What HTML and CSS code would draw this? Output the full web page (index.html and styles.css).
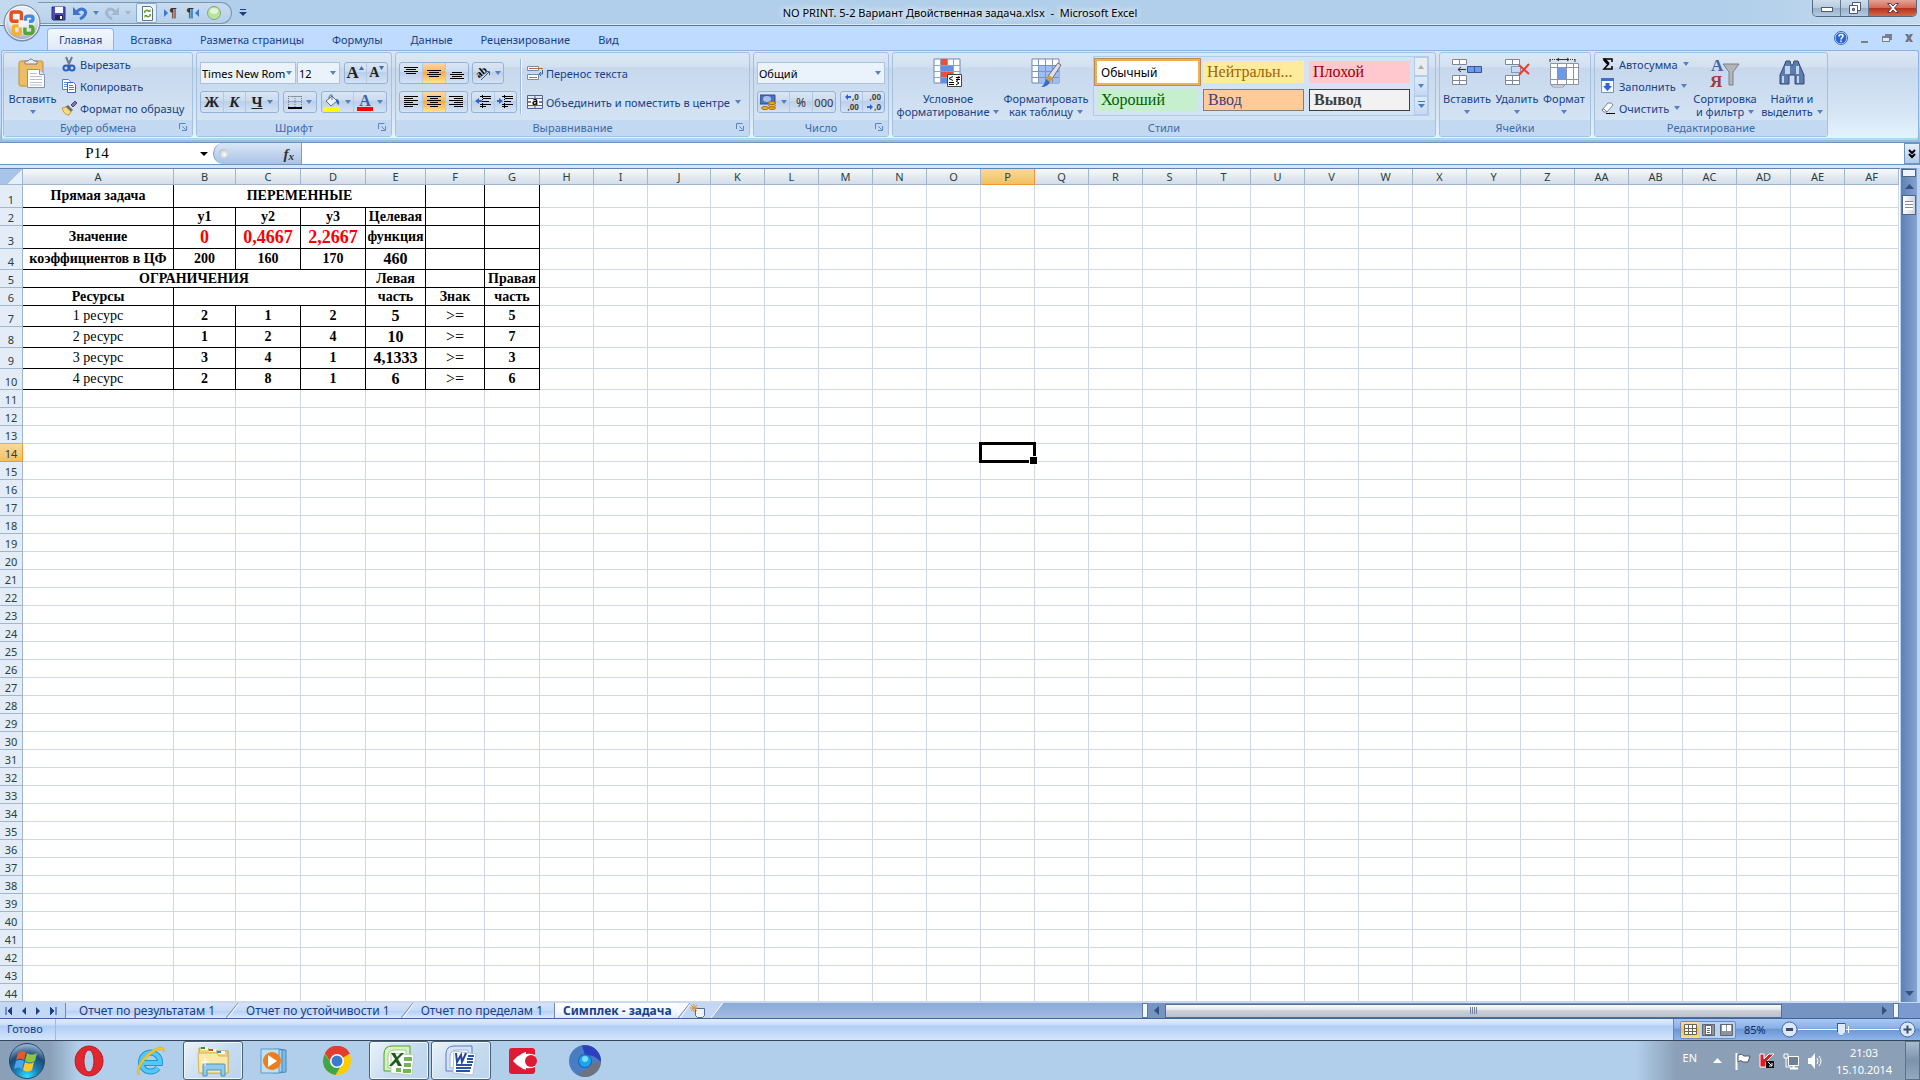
FILE: index.html
```html
<!DOCTYPE html>
<html lang="ru">
<head>
    <meta charset="UTF-8">
    <title>NO PRINT. 5-2 Вариант Двойственная задача.xlsx - Microsoft Excel</title>
    <link rel="stylesheet" href="styles.css">
</head>
<body>

<button class="orb" aria-label="Office">
  <svg width="40" height="40" viewBox="0 0 40 40">
    <defs>
      <radialGradient id="orbg" cx=".5" cy=".35" r=".65"><stop offset="0" stop-color="#fff"/><stop offset=".6" stop-color="#dfe4ec"/><stop offset="1" stop-color="#8d9bb3"/></radialGradient>
    </defs>
    <circle cx="20" cy="20" r="18" fill="url(#orbg)" stroke="#6f7f9a"/>
    <circle cx="20" cy="20" r="16.500" fill="none" stroke="#fff" opacity=".8"/>
    <g fill="none" stroke-width="3" transform="translate(-3 -3) scale(1.150)">
      <path d="M17 18.500h-4.500a2 2 0 0 1-2-2v-4a2 2 0 0 1 2-2h5a2 2 0 0 1 2 2v5" stroke="#e2501c"/>
      <path d="M23 18v-2a2 2 0 0 1 2-2h3a1.500 1.500 0 0 1 1.500 1.500v1.500a1.500 1.500 0 0 1-1.500 1.500h-2" stroke="#3b8ede"/>
      <path d="M17 22.500h-3a1.500 1.500 0 0 0-1.500 1.500v4a1.500 1.500 0 0 0 1.500 1.500h3a1.500 1.500 0 0 0 1.500-1.500v-4" stroke="#f6b02c"/>
      <path d="M22.500 24v3.500a1.500 1.500 0 0 0 1.500 1.500h4a1.500 1.500 0 0 0 1.500-1.500v-3a1.500 1.500 0 0 0-1.500-1.500h-2" stroke="#55a630"/>
    </g>
  </svg>
</button>

<header class="titlebar">
  <div class="title-left">
    <div class="qat">
      <button class="qb" aria-label="Сохранить"><svg width="16" height="16"><path d="M1 2h13v13h-12l-1-1z" fill="#4b4fb5" stroke="#2c2f83"/><path d="M4 2h8v6h-8z" fill="#f4f7fd"/><path d="M4 10h8v5h-8z" fill="#222850"/><path d="M9 11h2v3h-2z" fill="#fff"/></svg></button>
      <button class="qb" aria-label="Отменить"><svg width="16" height="16"><path d="M5 6.500c5-5 10-1 8 3-1 2-2 3-5 4.500" fill="none" stroke="#3e74ce" stroke-width="3"/><path d="M1 2v8h8z" fill="#3e74ce"/></svg></button>
      <i class="arrow"></i>
      <button class="qb" aria-label="Вернуть"><svg width="16" height="16"><path d="M11 6.500c-5-5-10-1-8 3 1 2 2 3 5 4.500" fill="none" stroke="#a3b7cf" stroke-width="3"/><path d="M15 2v8h-8z" fill="#a3b7cf"/></svg></button>
      <i class="arrow faded"></i>
      <button class="qb boxed" aria-label="Обновить"><svg width="16" height="18"><path d="M3.500 2.500h8l2 2v12h-10z" fill="#fff" stroke="#5b6f8e"/><path d="M5.500 9c0-3 3-3 4-2M11.500 10c0 3-3 3-4 2" fill="none" stroke="#5da21f" stroke-width="1.500"/><path d="M8.500 8h3v-3zM8.500 11h-3v3z" fill="#5da21f"/></svg></button>
      <button class="qb pil" aria-label="Слева направо"><svg width="5" height="8"><path d="M0 0l4 4-4 4z" fill="#3b78cf"/></svg>¶</button>
      <button class="qb pil" aria-label="Справа налево">¶<svg width="5" height="8"><path d="M5 0l-4 4 4 4z" fill="#3b78cf"/></svg></button>
      <button class="qb" aria-label="Запись"><svg width="16" height="16"><circle cx="8" cy="8" r="6.500" fill="#b7e39a" stroke="#8d9c90"/><ellipse cx="8" cy="6" rx="4" ry="3" fill="#e2f6d3"/></svg></button>
    </div>
    <button class="qcust" aria-label="Настройка панели"><svg width="8" height="8"><path d="M1 .5h6" stroke="#1d3f7a"/><path d="M0 3h8l-4 4z" fill="#1d3f7a"/></svg></button>
  </div>
  <h1 class="title">NO PRINT. 5-2 Вариант Двойственная задача.xlsx&nbsp; -&nbsp; Microsoft Excel</h1>
  <div class="winbtns">
    <button class="wb" aria-label="Свернуть"><svg width="14" height="12"><rect x="1.500" y="5.500" width="11" height="4" fill="#fff" stroke="#4c5b70"/></svg></button>
    <button class="wb" aria-label="Восстановить"><svg width="14" height="14"><path d="M4.500 1.500h8v8h-8z" fill="#fff" stroke="#4c5b70"/><path d="M1.500 4.500h8v8h-8z" fill="#fff" stroke="#4c5b70"/><path d="M4.500 7.500h2v2h-2z" fill="#9ab" stroke="#4c5b70"/></svg></button>
    <button class="wb close" aria-label="Закрыть"><svg width="14" height="12"><path d="M1.500 1.500h3l2.500 2.500 2.500-2.500h3l-4 4.500 4 4.500h-3l-2.500-2.500-2.500 2.500h-3l4-4.500z" fill="#fff" stroke="#5a3a45"/></svg></button>
  </div>
</header>

<nav class="tabs">
  <button class="tab on">Главная</button>
  <button class="tab">Вставка</button>
  <button class="tab">Разметка страницы</button>
  <button class="tab">Формулы</button>
  <button class="tab">Данные</button>
  <button class="tab">Рецензирование</button>
  <button class="tab">Вид</button>
  <div class="docbtns">
    <button aria-label="Справка"><svg width="14" height="14"><circle cx="7" cy="7" r="6" fill="#2a66d8" stroke="#eef5ff"/><circle cx="7" cy="7" r="6.500" fill="none" stroke="#3b67b0"/><path d="M5 5.500c0-3 4-2.500 4-.5 0 1.500-2 1.500-2 3.500M7 9.500v1.500" fill="none" stroke="#fff" stroke-width="1.500"/></svg></button>
    <button aria-label="Свернуть окно"><svg width="10" height="12"><path d="M1 9h7v2h-7z" fill="#7b8088"/></svg></button>
    <button aria-label="Восстановить окно"><svg width="10" height="10"><path d="M3 1h7v6h-2v2h-8v-6h3z" fill="#7b8088"/><path d="M1 5h6v3h-6z" fill="#dbe9ff"/></svg></button>
    <button aria-label="Закрыть окно"><svg width="10" height="10"><path d="M1 1h3l1 2 1-2h3l-2.500 4 2.500 4h-3l-1-2-1 2h-3l2.500-4z" fill="#70757d"/></svg></button>
  </div>
</nav>

<section class="ribbon-wrap">
<div class="ribbon">

  <div class="group g-clip">
    <div class="body">
      <button class="big paste">
        <svg width="30" height="32"><rect x="1" y="3" width="24" height="25" rx="2" fill="#eebc62" stroke="#c18f3b"/><path d="M7 6v-3h3q3-4 6 0h3v3z" fill="#e8ebf0" stroke="#7b7f88"/><path d="M9.500 11.500h12l5 5v13h-17z" fill="#fff" stroke="#8494b2"/><path d="M21.500 11.500v5h5" fill="#dce6f5" stroke="#8494b2"/><path d="M12 15.500h7M12 18.500h12M12 21.500h12M12 24.500h12M12 27h12" stroke="#b5bfd0"/></svg>
        <span>Вставить</span><i class="arrow"></i>
      </button>
      <div class="stack">
        <button class="small"><svg width="16" height="16"><path d="M5 1l4 9M11 1l-4 9" stroke="#6b7c99" stroke-width="2"/><circle cx="5" cy="12" r="2.500" fill="none" stroke="#2b5fbd" stroke-width="2"/><circle cx="11" cy="12" r="2.500" fill="none" stroke="#2b5fbd" stroke-width="2"/></svg>Вырезать</button>
        <button class="small"><svg width="16" height="16"><path d="M1.500 1.500h6l2 2v8h-8z" fill="#fff" stroke="#5b7fc0"/><path d="M3 4.500h4M3 6.500h5M3 8.500h5" stroke="#6a93d8"/><path d="M6.500 4.500h6l2 2v8h-8z" fill="#fff" stroke="#3f66b5"/><path d="M8 7.500h4M8 9.500h5M8 11.500h5" stroke="#4c7ed0"/></svg>Копировать</button>
        <button class="small"><svg width="16" height="16"><path d="M10 5l4-4 2 2-4 4z" fill="#8a6fb0" stroke="#4f4a6a"/><path d="M7 5l5 5-2 2-6-5z" fill="#6c7078"/><path d="M1 8l4-1 5 5-2 3q-5 0-7-7z" fill="#f4dc86" stroke="#c49a3a"/></svg>Формат по образцу</button>
      </div>
    </div>
    <div class="cap">Буфер обмена<svg class="dlg" width="8" height="8"><path d="M.5 6v-5.500h6M3.500 3.500l3 3M7.500 3v4.500h-4.500" fill="none" stroke="#5c85bb"/></svg></div>
  </div>

  <div class="group g-font">
    <div class="body rows">
      <div class="row">
        <div class="combo-pair">
          <label class="combo w96"><select aria-label="Шрифт"><option>Times New Rom</option></select><i class="arrow"></i></label>
          <label class="combo w42"><select aria-label="Размер"><option>12</option></select><i class="arrow"></i></label>
        </div>
        <div class="bg w44">
          <button class="serif f17" aria-label="Увеличить размер">A<svg width="5" height="4"><path d="M0 4h5l-2.500-4z" fill="#3a6bb5"/></svg></button>
          <button class="serif f14" aria-label="Уменьшить размер">A<svg width="5" height="4"><path d="M0 0h5l-2.500 4z" fill="#3a6bb5"/></svg></button>
        </div>
      </div>
      <div class="row">
        <div class="bg w79">
          <button class="serif">Ж</button><button class="serif it">К</button><button class="serif wide"><u>Ч</u><i class="arrow"></i></button>
        </div>
        <div class="bg w34">
          <button class="wide" aria-label="Границы"><svg width="14" height="14"><path d="M.5 1v12M3.500 1.500h10M.5 1.500h13M.5 6.500h13M13.500 1v12M7 1v12" stroke="#6e7c92" stroke-dasharray="1 1" fill="none"/><path d="M0 13h14" stroke="#000" stroke-width="2"/></svg><i class="arrow"></i></button>
        </div>
        <div class="bg w66">
          <button class="wide" aria-label="Заливка"><svg width="17" height="17"><path d="M2 7l6-5 5 5-6 5z" fill="#eef3fa" stroke="#5a6d8d"/><path d="M5 5q0-5 3-4v5" fill="none" stroke="#5a6d8d"/><path d="M12 5q4 0 3 6-3-1-3-6" fill="#3463b2"/><path d="M0 13h16v4h-16z" fill="#ff0"/></svg><i class="arrow"></i></button>
          <button class="wide fc" aria-label="Цвет текста"><span>A</span><i class="arrow"></i></button>
        </div>
      </div>
    </div>
    <div class="cap">Шрифт<svg class="dlg" width="8" height="8"><path d="M.5 6v-5.500h6M3.500 3.500l3 3M7.500 3v4.500h-4.500" fill="none" stroke="#5c85bb"/></svg></div>
  </div>

  <div class="group g-align">
    <div class="body">
      <div class="rows leftcol">
        <div class="row tight">
          <div class="bg w70">
            <button aria-label="По верхнему краю"><svg width="14" height="14"><path d="M0 1.500h14M2 3.500h10M0 5.500h14M2 7.500h10" stroke="#000"/></svg></button>
            <button class="sel" aria-label="По середине"><svg width="14" height="14"><path d="M0 4.500h14M2 6.500h10M0 8.500h14M2 10.500h10" stroke="#000"/></svg></button>
            <button aria-label="По нижнему краю"><svg width="14" height="14"><path d="M2 6.500h10M0 8.500h14M2 10.500h10M0 12.500h14" stroke="#000"/></svg></button>
          </div>
          <div class="bg w32">
            <button class="wide" aria-label="Ориентация"><svg width="16" height="16" class="ori"><text x="1" y="11" font-size="11" font-weight="bold" transform="rotate(-40 6 8)">ab</text><path d="M6 15l8-8M11 6.500h3.500v3.500" fill="none" stroke="#555"/></svg><i class="arrow"></i></button>
          </div>
        </div>
        <div class="row tight">
          <div class="bg w70">
            <button aria-label="По левому краю"><svg width="14" height="14"><path d="M0 1.500h14M0 3.500h9M0 5.500h14M0 7.500h9M0 9.500h14M0 11.500h9" stroke="#000"/></svg></button>
            <button class="sel" aria-label="По центру"><svg width="14" height="14"><path d="M0 1.500h14M3 3.500h8M0 5.500h14M3 7.500h8M0 9.500h14M3 11.500h8" stroke="#000"/></svg></button>
            <button aria-label="По правому краю"><svg width="14" height="14"><path d="M0 1.500h14M5 3.500h9M0 5.500h14M5 7.500h9M0 9.500h14M5 11.500h9" stroke="#000"/></svg></button>
          </div>
          <div class="bg w46">
            <button aria-label="Уменьшить отступ"><svg width="16" height="14"><path d="M5 1.500h11M8 3.500h8M8 6.500h6M5 9.500h11M5 11.500h6" stroke="#000" /><path d="M7.500 0v14" stroke="#000" stroke-dasharray="1 1"/><path d="M0 6l4-3v2h3v2h-3v2z" fill="#2e65c9"/></svg></button>
            <button aria-label="Увеличить отступ"><svg width="16" height="14"><path d="M5 1.500h11M8 3.500h8M8 6.500h6M5 9.500h11M5 11.500h6" stroke="#000" /><path d="M7.500 0v14" stroke="#000" stroke-dasharray="1 1"/><path d="M6 6l-4-3v2h-2v2h2v2z" fill="#2e65c9"/></svg></button>
          </div>
        </div>
      </div>
      <div class="vline"></div>
      <div class="rows wrapcol">
        <button class="small tall"><svg width="16" height="16"><path d="M.5 1.500h11v4h-11zM.5 9.500h11v5h-11z" fill="#fff" stroke="#7b8ba5"/><path d="M2 3.500h14M2 12.500h8" stroke="#b5722c"/><path d="M15.500 5v4h-3M14 7l-2 2 2 2" fill="none" stroke="#3f5f96"/></svg>Перенос текста</button>
        <button class="small tall"><svg width="16" height="16"><path d="M.5 1.500h15v13h-15z" fill="#dfe9f8" stroke="#51658c"/><path d="M8 1v3M8 12v3M1 4.500h14M1 11.500h14" stroke="#51658c"/><path d="M1 5h14v6h-14z" fill="#fff"/><path d="M1 8h3M12 8h3" stroke="#000"/><text x="5" y="11" font-size="10" font-weight="bold">a</text></svg>Объединить и поместить в центре<i class="arrow"></i></button>
      </div>
    </div>
    <div class="cap">Выравнивание<svg class="dlg" width="8" height="8"><path d="M.5 6v-5.500h6M3.500 3.500l3 3M7.500 3v4.500h-4.500" fill="none" stroke="#5c85bb"/></svg></div>
  </div>

  <div class="group g-num">
    <div class="body rows">
      <div class="row"><label class="combo full"><select aria-label="Числовой формат"><option>Общий</option></select><i class="arrow"></i></label></div>
      <div class="row">
        <div class="bg w80">
          <button class="wide" aria-label="Финансовый"><svg width="17" height="17"><path d="M0 1h15v9h-15z" fill="#4a72bd" stroke="#2f4f8f"/><ellipse cx="7" cy="5" rx="4" ry="3" fill="#a9c1ea"/><g fill="#f0b22d" stroke="#a86e10"><ellipse cx="12" cy="14" rx="3.500" ry="1.500"/><ellipse cx="12" cy="11.500" rx="3.500" ry="1.500"/><ellipse cx="12" cy="9" rx="3.500" ry="1.500"/><ellipse cx="5" cy="14" rx="3.500" ry="1.500"/></g></svg><i class="arrow"></i></button>
          <button class="glyph">%</button><button class="glyph n000">000</button>
        </div>
        <div class="bg w46">
          <button class="dec" aria-label="Увеличить разрядность"><span><svg width="6" height="6"><path d="M0 3l3-3v2h3v2h-3v2z" fill="#2e65c9"/></svg>,0</span><span>,00</span></button>
          <button class="dec" aria-label="Уменьшить разрядность"><span>,00</span><span><svg width="6" height="6"><path d="M6 3l-3-3v2h-3v2h3v2z" fill="#2e65c9"/></svg>,0</span></button>
        </div>
      </div>
    </div>
    <div class="cap">Число<svg class="dlg" width="8" height="8"><path d="M.5 6v-5.500h6M3.500 3.500l3 3M7.500 3v4.500h-4.500" fill="none" stroke="#5c85bb"/></svg></div>
  </div>

  <div class="group g-styles">
    <div class="body">
      <button class="big w104">
        <svg width="30" height="30"><path d="M1 1h26v24h-26z" fill="#fff" stroke="#6f87ad"/><path d="M8 1h6v6h-6z" fill="#f04e37"/><path d="M8 7h12v6h-12z" fill="#5f8fe8"/><path d="M8 13h12v6h-12z" fill="#f04e37"/><path d="M8 19h6v6h-6z" fill="#5f8fe8"/><path d="M7.500 1v24M14.500 1v6M14.500 19v6M20.500 1v24M1 7.500h26M1 13.500h26M1 19.500h26" stroke="#8ea3c4" fill="none"/><path d="M14.500 16.500h14v12h-14z" fill="#fff" stroke="#444"/><path d="M20 18.500l-4 2 4 2M16 24.500h5M16 26.500h5M23 19.500h4M23 21.500h4M26 18l-2 5M23 23l3 2-3 2" fill="none" stroke="#000"/></svg>
        <span>Условное</span><span>форматирование<i class="arrow"></i></span>
      </button>
      <button class="big w92">
        <svg width="30" height="30"><path d="M1 1h27v24h-27z" fill="#fff" stroke="#6f87ad"/><path d="M8 7h20v18h-20z" fill="#9dbdf5"/><path d="M7.500 1v24M14.500 1v24M21.500 1v24M1 7.500h27M1 13.500h27M1 19.500h27" stroke="#7d95bd" fill="none"/><path d="M27 5l3 2-9 14-4-3z" fill="#dcdfe4" stroke="#6b6f78"/><path d="M18 17l4 3-3 4-4-3z" fill="#d99a3a"/><path d="M15 21l4 3q-2 5-9 5 4-3 5-8z" fill="#3c6bc0"/></svg>
        <span>Форматировать</span><span>как таблицу<i class="arrow"></i></span>
      </button>
      <div class="gallery">
        <div class="cells">
          <button class="st normal">Обычный</button><button class="st neutral">Нейтральн...</button><button class="st bad">Плохой</button>
          <button class="st good">Хороший</button><button class="st input">Ввод</button><button class="st output">Вывод</button>
        </div>
        <div class="gscroll">
          <button class="off" aria-label="Вверх"><svg width="7" height="4"><path d="M0 4h6l-3-4z" fill="#a9aeb5"/></svg></button>
          <button aria-label="Вниз"><i class="arrow"></i></button>
          <button aria-label="Дополнительно"><svg width="7" height="8"><path d="M0 .5h7" stroke="#4a7ab8"/><path d="M0 3h7l-3.500 4z" fill="#4a7ab8"/></svg></button>
        </div>
      </div>
    </div>
    <div class="cap">Стили</div>
  </div>

  <div class="group g-cells">
    <div class="body">
      <button class="big w50"><svg width="32" height="30"><path d="M1.500 1.500h14v5h-14zM1.500 17.500h14v9h-14z" fill="#fff" stroke="#7f8799"/><path d="M8.500 2v5M8.500 17v10M1 22.500h15" stroke="#7f8799"/><path d="M16.500 8.500h14v6h-14z" fill="#6d9bea" stroke="#34559a"/><path d="M23.500 9v6" stroke="#34559a"/><path d="M15 11.500h-8M10 9l-3 2.500 3 2.500" fill="none" stroke="#333"/></svg><span>Вставить</span><i class="arrow"></i></button>
      <button class="big w50"><svg width="28" height="30"><path d="M2.500 1.500h14v5h-14zM2.500 17.500h14v9h-14z" fill="#fff" stroke="#7f8799"/><path d="M9.500 2v5M9.500 17v10M2 22.500h15" stroke="#7f8799"/><path d="M8.500 8.500h9v6h-9z" fill="none" stroke="#34559a" stroke-dasharray="1 1"/><path d="M16 7l10 9M26 6l-10 11" stroke="#ee3b24" stroke-width="2"/></svg><span>Удалить</span><i class="arrow"></i></button>
      <button class="big w44"><svg width="30" height="30"><path d="M1 1v3M26 1v3" stroke="#333"/><path d="M1 1.500h25" stroke="#333" stroke-dasharray="1 1"/><path d="M8 1.500h12M10 0l-2 1.500 2 1.500M18 0l2 1.500-2 1.500" fill="none" stroke="#333"/><path d="M1.500 5.500h28v21h-28z" fill="#fff" stroke="#8c94a5"/><path d="M9 10h9v12h-9z" fill="#6d9bea"/><path d="M1 9.500h29M1 21.500h29M8.500 5v22M17.500 5v22M24.500 5v22" stroke="#8c94a5" fill="none"/><path d="M2 27h14l-2 2h-10z" fill="#fff" stroke="#8c94a5"/></svg><span>Формат</span><i class="arrow"></i></button>
    </div>
    <div class="cap">Ячейки</div>
  </div>

  <div class="group g-edit">
    <div class="body">
      <div class="stack editstack">
        <button class="small"><svg width="14" height="14"><path d="M11 5v-3h-8l4.500 5-4.500 5h8v-3" fill="none" stroke="#000" stroke-width="1.500"/><path d="M3 2l4.500 5" stroke="#000" stroke-width="3"/></svg>Автосумма<i class="arrow"></i></button>
        <button class="small"><svg width="14" height="16"><path d="M.5.5h12v14h-12z" fill="#f2f7ff" stroke="#7893bf"/><path d="M0 0h13v3h-13z" fill="#3f70c8"/><path d="M4.500 5h4v3h2.500l-4.500 5-4.500-5h2.500z" fill="#2f66d2"/></svg>Заполнить<i class="arrow"></i></button>
        <button class="small"><svg width="14" height="14"><path d="M1 9l6-7q4-1 5 2l-6 7q-4 1-5-2z" fill="#fff" stroke="#75839b"/><path d="M1 9q1-3 5 2" fill="none" stroke="#75839b"/><path d="M5 12.500h9" stroke="#000"/></svg>Очистить<i class="arrow"></i></button>
      </div>
      <button class="big w72"><svg width="30" height="30" class="az"><path d="M13 6h16l-6 8v13h-4v-13z" fill="#b3b5b8" stroke="#7d8086"/><text x="1" y="13" font-size="17" font-weight="bold" fill="#4664ad">А</text><text x="0" y="29" font-size="17" font-weight="bold" fill="#a33a3a">Я</text></svg><span>Сортировка</span><span>и фильтр<i class="arrow"></i></span></button>
      <button class="big w62"><svg width="30" height="30"><path d="M9 3h4l1 4h2l1-4h4l2 5 4 9v9h-9v-9h-6v9h-9v-9l4-9z" fill="#5b7cae" stroke="#34496f"/><path d="M8 8h5v8h-5zM19 8h3v8h-3zM5 18h2v7h-2zM20 18h2v7h-2z" fill="#c3d3ea"/></svg><span>Найти и</span><span>выделить<i class="arrow"></i></span></button>
    </div>
    <div class="cap">Редактирование</div>
  </div>

</div>
</section>

<div class="fbar">
  <div class="namebox"><input type="text" value="P14" aria-label="Имя"><i class="arrow black"></i></div>
  <div class="fx"><span class="dot"></span><button aria-label="Вставить функцию">f<sub>x</sub></button></div>
  <input class="formula" type="text" aria-label="Строка формул">
  <button class="expand" aria-label="Развернуть"><svg width="8" height="10"><path d="M1 1l3 3 3-3M1 5l3 3 3-3" fill="none" stroke="#000" stroke-width="2"/></svg></button>
</div>

<main class="sheet">
  <div class="gridwrap">
    <table class="grid">
      <colgroup>
        <col class="c-head"><col class="c-a"><col class="c-b"><col class="c-c"><col class="c-d"><col class="c-e"><col class="c-f"><col class="c-g">
        <col><col><col class="c-j"><col span="22">
      </colgroup>
      <thead><tr id="letters"><th class="corner"></th></tr></thead>
      <tbody id="rows">
        <tr class="h23"><th>1</th><td class="k b">Прямая задача</td><td class="k b" colspan="4">ПЕРЕМЕННЫЕ</td><td class="k"></td><td class="k"></td></tr>
        <tr class="h18"><th>2</th><td class="k"></td><td class="k b">y1</td><td class="k b">y2</td><td class="k b">y3</td><td class="k b">Целевая</td><td class="k"></td><td class="k"></td></tr>
        <tr class="h23"><th>3</th><td class="k b">Значение</td><td class="k red">0</td><td class="k red">0,4667</td><td class="k red">2,2667</td><td class="k b">функция</td><td class="k"></td><td class="k"></td></tr>
        <tr class="h21"><th>4</th><td class="k b">коэффициентов в ЦФ</td><td class="k b">200</td><td class="k b">160</td><td class="k b">170</td><td class="k b big16">460</td><td class="k"></td><td class="k"></td></tr>
        <tr class="h18"><th>5</th><td class="k b" colspan="4">ОГРАНИЧЕНИЯ</td><td class="k b">Левая</td><td class="k"></td><td class="k b">Правая</td></tr>
        <tr class="h18"><th>6</th><td class="k b">Ресурсы</td><td class="k" colspan="3"></td><td class="k b">часть</td><td class="k b">Знак</td><td class="k b">часть</td></tr>
        <tr class="h21"><th>7</th><td class="k">1 ресурс</td><td class="k b">2</td><td class="k b">1</td><td class="k b">2</td><td class="k b big16">5</td><td class="k big16">&gt;=</td><td class="k b">5</td></tr>
        <tr class="h21"><th>8</th><td class="k">2 ресурс</td><td class="k b">1</td><td class="k b">2</td><td class="k b">4</td><td class="k b big16">10</td><td class="k big16">&gt;=</td><td class="k b">7</td></tr>
        <tr class="h21"><th>9</th><td class="k">3 ресурс</td><td class="k b">3</td><td class="k b">4</td><td class="k b">1</td><td class="k b big16">4,1333</td><td class="k big16">&gt;=</td><td class="k b">3</td></tr>
        <tr class="h21"><th>10</th><td class="k">4 ресурс</td><td class="k b">2</td><td class="k b">8</td><td class="k b">1</td><td class="k b big16">6</td><td class="k big16">&gt;=</td><td class="k b">6</td></tr>
      </tbody>
    </table>
  </div>
  <div class="vscroll">
    <span class="split"></span>
    <button aria-label="Вверх"><svg width="9" height="5"><path d="M0 5h9l-4.500-5z" fill="#34507f"/></svg></button>
    <span class="vthumb"></span>
    <span class="fill"></span>
    <button aria-label="Вниз"><svg width="9" height="5"><path d="M0 0h9l-4.500 5z" fill="#34507f"/></svg></button>
  </div>
</main>

<div class="sheetbar">
  <div class="sheettabs">
    <div class="navs">
      <button aria-label="Первый лист"><svg width="7" height="8"><path d="M1 0v8M7 0v8l-4-4z" stroke="#1c3f86" fill="#1c3f86" stroke-width="1"/></svg></button>
      <button aria-label="Предыдущий лист"><svg width="5" height="8"><path d="M5 0v8l-4-4z" fill="#1c3f86"/></svg></button>
      <button aria-label="Следующий лист"><svg width="5" height="8"><path d="M0 0v8l4-4z" fill="#1c3f86"/></svg></button>
      <button aria-label="Последний лист"><svg width="7" height="8"><path d="M6 0v8M0 0v8l4-4z" stroke="#1c3f86" fill="#1c3f86" stroke-width="1"/></svg></button>
    </div>
    <button class="stab first">Отчет по результатам 1</button>
    <svg class="slash" width="12" height="15"><path d="M0 15l12-15" stroke="#7389b0"/><path d="M2 15l11-15" stroke="#fff"/></svg>
    <button class="stab">Отчет по устойчивости 1</button>
    <svg class="slash" width="12" height="15"><path d="M0 15l12-15" stroke="#7389b0"/><path d="M2 15l11-15" stroke="#fff"/></svg>
    <button class="stab">Отчет по пределам 1</button>
    <button class="stab on">Симплек - задача</button>
    <svg width="12" height="15"><path d="M0 0h12l-12 15z" fill="#f6f9ff"/><path d="M12 0v15h-12z" fill="#c3d6f4"/><path d="M0 15l12-15" stroke="#7389b0"/><path d="M2 15l11-15" stroke="#fff"/></svg>
    <button class="newtab" aria-label="Вставить лист"><svg width="16" height="14"><path d="M5.500 4.500h9v7l-2 2h-5l-2-2z" fill="#eef3fc" stroke="#56698f"/><path d="M4 0v8M0 4h8M1 1l6 6M7 1l-6 6" stroke="#e0922b"/></svg></button>
    <svg width="12" height="15"><path d="M0 0h12l-12 15z" fill="#c3d6f4"/><path d="M0 15l12-15" stroke="#fff"/></svg>
  </div>
  <div class="hscroll">
    <span class="hsplit"></span>
    <button aria-label="Влево"><svg width="5" height="9"><path d="M5 0v9l-5-4.500z" fill="#34507f"/></svg></button>
    <span class="hthumb"></span>
    <span class="hfill"></span>
    <button aria-label="Вправо"><svg width="5" height="9"><path d="M0 0v9l5-4.500z" fill="#34507f"/></svg></button>
    <span class="hsplit"></span>
    <span class="hcorner"></span>
  </div>
</div>

<footer class="status">
  <span class="ready">Готово</span>
  <span class="grow"></span>
  <div class="zoom">
    <div class="views">
      <button class="sel" aria-label="Обычный"><svg width="13" height="12"><path d="M.5.5h12v10h-12zM4.500 0v11M8.500 0v11M0 4.500h13M0 7.500h13" fill="#fff" stroke="#6b6455"/></svg></button>
      <button aria-label="Разметка страницы"><svg width="13" height="12"><path d="M.5.5h12v11h-12z" fill="#8e949c" stroke="#5d6773"/><path d="M3.500 1.500h6v9h-6z" fill="#fff" stroke="#5d6773"/><path d="M5 4.500h3M5 6.500h3M5 8.500h3" stroke="#5d6773"/></svg></button>
      <button aria-label="Страничный"><svg width="13" height="12"><path d="M.5.5h12v11h-12z" fill="#8e949c" stroke="#5d6773"/><path d="M2 1h4v6h-4zM7 1h4v6h-4z" fill="#fff"/></svg></button>
    </div>
    <button class="pct">85%</button>
    <button class="zb" aria-label="Уменьшить"><svg width="17" height="17"><circle cx="8.500" cy="8.500" r="7.500" fill="#dbe8fa" stroke="#4b6796"/><path d="M5 8.500h7" stroke="#3c4c68" stroke-width="3"/></svg></button>
    <input class="slider" type="range" min="0" max="100" value="42" aria-label="Масштаб">
    <button class="zb" aria-label="Увеличить"><svg width="17" height="17"><circle cx="8.500" cy="8.500" r="7.500" fill="#dbe8fa" stroke="#4b6796"/><path d="M4.500 8.500h8M8.500 4.500v8" stroke="#3c4c68" stroke-width="2"/></svg></button>
  </div>
</footer>

<div class="taskbar">
  <button class="start" aria-label="Пуск"><svg width="38" height="38"><defs><radialGradient id="st" cx=".5" cy=".95" r=".9"><stop offset="0" stop-color="#2fe2ff"/><stop offset=".35" stop-color="#1a86c0"/><stop offset=".7" stop-color="#1c4a78"/><stop offset="1" stop-color="#8fb0cf"/></radialGradient></defs><circle cx="19" cy="19" r="17.500" fill="url(#st)" stroke="#244a6e"/><path d="M10 11q4-3 8-1l-2 8q-4-3-8 0z" fill="#e8582a"/><path d="M19 11q5 3 10 0l-2 8q-5 3-10 0z" fill="#8cc63e"/><path d="M8 19q4-2 8 0l-2 8q-4-3-8 0z" fill="#4fa3e8"/><path d="M17 20q5 3 9 0l-2 8q-5 3-9 0z" fill="#fbc92e"/></svg></button>
  <button class="task" aria-label="Opera"><svg width="30" height="32"><path d="M15 1a14 15 0 1 0 .1 0zM15 5a5 11 0 1 1-.1 0z" fill="#e0272f" fill-rule="evenodd" stroke="#c01a22"/></svg></button>
  <button class="task" aria-label="Internet Explorer"><svg width="32" height="32"><path d="M7 18h18a9.500 9.500 0 1 0-2 5" fill="none" stroke="#1f94d6" stroke-width="6"/><path d="M7 18h18a9.500 9.500 0 1 0-2 5" fill="none" stroke="#58c7f5" stroke-width="4"/><path d="M4 30c-6-3 4-22 18-27 6-2 8 0 7 4-1-3-4-3-8-1-9 4-19 17-17 24z" fill="#f7c71d" stroke="#dda514" stroke-width=".5"/></svg></button>
  <button class="task open" aria-label="Проводник"><svg width="34" height="34"><path d="M3 4h9l1 3h19v22h-28z" fill="#f2d67e" stroke="#c79f3a"/><path d="M5 3h7v3h-7z" fill="#fff"/><path d="M5 3h4v2h-4z" fill="#1da31d"/><path d="M13 5h7v3h-7z" fill="#fff"/><path d="M13 5h4v2h-4z" fill="#d94a2a"/><path d="M21 7h8v3h-8z" fill="#fff"/><path d="M21 7h4v2h-4z" fill="#2a86d8"/><path d="M2 9h19l2 3h9v17h-29z" fill="#fae9a8" stroke="#d8b452"/><path d="M7 32v-11q0-1 1-1h20q1 0 1 1v11h-4v-6h-14v6z" fill="#8fcbea" stroke="#4c93bd"/><path d="M9 14v8M5 18h8" stroke="#fff"/></svg></button>
  <button class="task" aria-label="Медиаплеер"><svg width="30" height="30"><path d="M18 3l8 1v22l-8 1z" fill="#7cbbe4" stroke="#4a87b8"/><path d="M14 3l8 1v22l-8 1z" fill="#a7d2ee" stroke="#4a87b8"/><path d="M1 3h18v24h-18z" fill="#bfdff3" stroke="#5d9ac8"/><circle cx="12" cy="15" r="9" fill="#f07d1a"/><path d="M8 9l9 6-9 6z" fill="#fff"/></svg></button>
  <button class="task" aria-label="Chrome"><svg width="30" height="30"><circle cx="15" cy="15" r="14" fill="#fc0"/><path d="M15 15l-12.100-7a14 14 0 0 1 24.200 0z" fill="#e33b2e"/><path d="M15 8h13a14 14 0 0 0-25-1l6 10z" fill="#e33b2e"/><path d="M2.900 8a14 14 0 0 0 10.600 21l6.500-11-10 1z" fill="#3fa648"/><circle cx="15" cy="15" r="7" fill="#fff"/><circle cx="15" cy="15" r="5.500" fill="#3a7bd0"/></svg></button>
  <button class="task open" aria-label="Excel"><svg width="32" height="32"><path d="M1 9q0-8 8-8h18v25h-26z" fill="#d7efc6" stroke="#4ba32c"/><path d="M5 12q0-7 7-7h11v18h-18z" fill="#fff" stroke="#9bd07c"/><path d="M8 8l23 2-2 20-21-2z" fill="#fff" stroke="#bcd0b4"/><path d="M21 12h8v4h-8zM21 18h7v4h-7zM20 24h8v4h-8zM13 23h5v4h-5z" fill="#74b457"/><path d="M8 8h4l2 4 4-4h3l-6 6 4 7h-4l-2-4-4 4h-3l6-7z" fill="#1e5b1b"/></svg></button>
  <button class="task open" aria-label="Word"><svg width="32" height="32"><path d="M1 9q0-8 8-8h18v25h-26z" fill="#d5e2f8" stroke="#5a7cc5"/><path d="M5 12q0-7 7-7h11v18h-18z" fill="#fff" stroke="#9ab2e2"/><path d="M9 6l22 3-3 21-20-2z" fill="#fff" stroke="#b5bfd8"/><path d="M23 11h6M22 14h6M22 17h6M11 20h16M11 23h15M11 26h14" stroke="#2c51a6" stroke-width="2"/><path d="M11 8l1 9 4-7 1 7 4-9" fill="none" stroke="#24479c" stroke-width="2"/></svg></button>
  <button class="task" aria-label="Просмотр"><svg width="30" height="28"><rect x="1" y="1" width="26" height="26" rx="3" fill="#df1a35"/><path d="M27 3q-14 1-22 11 8 10 22 10z" fill="#fff"/><circle cx="23" cy="14" r="6" fill="#df1a35"/><path d="M18 3h9v5q-5-2-9-1zM18 25h9v-5q-5 2-9 1z" fill="#df1a35"/></svg></button>
  <button class="task" aria-label="Браузер"><svg width="34" height="34"><circle cx="17" cy="17" r="16" fill="#4a7cc2"/><path d="M14 1.500a16 16 0 0 1 19 16.500q-7-8-16-7z" fill="#2c3fbe"/><path d="M33 17a16 16 0 0 1-25 13q10-1 14-10z" fill="#6d7480"/><circle cx="17" cy="17" r="7" fill="#1b5fc0"/><circle cx="17" cy="17" r="6" fill="#18a7ee"/><circle cx="17" cy="15" r="3" fill="#7fdcff"/></svg></button>
  <div class="tray">
    <span class="lang">EN</span>
    <svg class="more" width="9" height="5"><path d="M0 5h9l-4.500-5z" fill="#fff"/></svg>
    <svg width="16" height="18"><path d="M1.500 1v17" stroke="#fff" stroke-width="2"/><path d="M3 3q4-2 6 1h6l-2 6h-5q-2-3-5 0z" fill="#fff" stroke="#556"/></svg>
    <svg width="16" height="16"><path d="M1 1h4v5l5-5h5l-8 8v5h-6z" fill="#e01b22" stroke="#fff"/><path d="M7 8h8v7h-8z" fill="#111"/><path d="M9 9l4 4v-3M13 13h-3" fill="none" stroke="#fff"/></svg>
    <svg width="16" height="18"><path d="M5.500 4.500h10v9h-10z" fill="#6d8196" stroke="#fff"/><path d="M7 16.500h8M10.500 14v2" stroke="#fff" stroke-width="2"/><path d="M1 2h4v4h-4zM3 6v9h5" fill="none" stroke="#fff"/></svg>
    <svg width="16" height="18"><path d="M1 6h3l4-5v16l-4-5h-3z" fill="#fff"/><path d="M10 6q2 3 0 6M12 4q4 5 0 10" fill="none" stroke="#fff"/></svg>
    <div class="clock"><span>21:03</span><span>15.10.2014</span></div>
    <button class="peek" aria-label="Свернуть все окна"></button>
  </div>
</div>

<script src="grid.js"></script>
</body>
</html>
```
FILE: styles.css
```css
* {
  box-sizing: border-box;
}
body {
  margin: 0;
  height: 100vh;
  display: flex;
  flex-direction: column;
  overflow: hidden;
  position: relative;
  background: #bfdbff;
  font-family: "Noto Sans", "Open Sans", sans-serif;
  font-size: 11px;
  color: #15428b;
}
button, input, select {
  font: inherit;
  color: inherit;
  margin: 0;
  padding: 0;
  border: 0;
  background: none;
  outline: none;
}
svg {
  display: block;
  flex: none;
}

/* small dropdown arrow */
.arrow {
  display: inline-block;
  flex: none;
  border: 3px solid transparent;
  border-top: 4px solid #5583bd;
  border-bottom: 0;
}
.arrow.faded { border-top-color: #a9b3c0; }
.arrow.black { border-width: 4px 4px 0; border-top-color: #000; }

/* Title bar */
.orb {
  position: absolute;
  left: 2px;
  top: 3px;
  z-index: 5;
}
.titlebar {
  flex: none;
  height: 26px;
  display: grid;
  grid-template-columns: 1fr auto 1fr;
  align-items: center;
  background: linear-gradient(90deg, #c3d9ee, #b1cfea 12%, #b1cfea 90%, #c5dbef);
  border-bottom: 1px solid #5c7790;
  box-shadow: inset 0 -1px #dcecfa;
}
.title-left {
  display: flex;
  align-items: center;
  padding-left: 38px;
}
.qat {
  display: flex;
  align-items: center;
  height: 22px;
  gap: 5px;
  padding: 0 9px 0 13px;
  border: 1px solid #7f95ad;
  border-left: 0;
  border-radius: 0 11px 11px 0;
  background: linear-gradient(#c8dcf0, #b6d0ea);
}
.qb {
  display: flex;
  align-items: center;
  justify-content: center;
}
.qb.boxed {
  width: 21px;
  height: 20px;
  border: 1px solid #8ba9cf;
  border-radius: 2px;
  background: #e6f0fc;
}
.qb.pil {
  width: 17px;
  font-family: "Liberation Sans", sans-serif;
  font-size: 13px;
  font-weight: bold;
  color: #333;
}
.qcust { margin-left: 7px; }
.title {
  margin: 0;
  font-size: 11px;
  font-weight: normal;
  color: #000;
  white-space: nowrap;
  text-shadow: 0 0 6px #fff, 0 0 8px #fff;
}
.winbtns {
  display: flex;
  justify-self: end;
  align-self: start;
  margin-right: 3px;
  border: 1px solid #54687f;
  border-top: 0;
  border-radius: 0 0 5px 5px;
  overflow: hidden;
}
.wb {
  display: flex;
  align-items: center;
  justify-content: center;
  width: 28px;
  height: 16px;
  border-right: 1px solid #66798f;
  background: linear-gradient(#cfdeed, #b7cadd 50%, #97b0ca 51%, #b4cbe0);
}
.wb.close {
  width: 47px;
  border-right: 0;
  background: linear-gradient(#e4a395, #d26a54 50%, #b5301b 51%, #d4694b);
}

/* Ribbon tabs */
.tabs {
  flex: none;
  display: flex;
  align-items: flex-end;
  height: 24px;
  padding-left: 47px;
  background: #bfdbff;
}
.tab {
  height: 22px;
  padding: 0 14px;
}
.tab.on {
  padding: 0 11px;
  margin-right: 2px;
  border: 1px solid #8eb4e8;
  border-bottom: 0;
  border-radius: 4px 4px 0 0;
  background: linear-gradient(#f4f8fe, #dfe9f6);
}
.docbtns {
  display: flex;
  align-items: center;
  align-self: center;
  gap: 12px;
  margin-left: auto;
  padding-right: 6px;
}

/* Ribbon */
.ribbon-wrap {
  flex: none;
  height: 92px;
  padding: 0 1px;
  background: linear-gradient(#bfdbff 80%, #9bb8dd);
}
.ribbon {
  display: flex;
  gap: 3px;
  height: 90px;
  padding: 1px 1px 0;
  border: 1px solid #8db2e3;
  border-bottom: 2px solid #9fe0f0;
  border-radius: 3px;
  background: linear-gradient(#dbe6f4, #d0deef 16px, #c7d8ed 17px, #d5e5f5 70%, #e2f3fd);
}
.group {
  display: flex;
  flex-direction: column;
  height: 85px;
  border: 1px solid #a5c1de;
  border-radius: 3px;
  background: linear-gradient(#dce7f4, #d2e0f0 14px, #c7d8ed 15px, #d8e7f6);
}
.g-clip { width: 190px; }
.g-font { width: 196px; }
.g-align { width: 355px; }
.g-num { width: 136px; }
.g-styles { width: 544px; }
.g-cells { width: 152px; }
.g-edit { width: 234px; }
.body {
  display: flex;
  flex: 1;
  min-height: 0;
}
.cap {
  position: relative;
  flex: none;
  height: 16px;
  line-height: 16px;
  text-align: center;
  color: #3e6aaa;
  background: #c2d9f1;
}
.dlg {
  position: absolute;
  right: 5px;
  top: 3px;
}
.rows {
  display: flex;
  flex-direction: column;
  gap: 7px;
  padding: 9px 3px 0;
}
.row {
  display: flex;
  gap: 4px;
  height: 22px;
}
.row.tight { gap: 3px; }
.combo-pair {
  display: flex;
  gap: 1px;
}
.combo {
  display: flex;
  align-items: center;
  height: 22px;
  padding-right: 3px;
  border: 1px solid #abc1de;
  background: #eaf2fb;
}
.combo select {
  appearance: none;
  flex: 1;
  min-width: 0;
  padding-left: 1px;
  color: #000;
}
.combo.full { width: 128px; }
.w96 { width: 96px; }
.w42 { width: 43px; }

/* button groups */
.bg {
  display: flex;
  height: 22px;
  border: 1px solid #95b3d9;
  border-radius: 3px;
  background: linear-gradient(#dbe6f4, #cbdaee 45%, #bccfea 46%, #d3e2f4);
}
.bg button {
  display: flex;
  align-items: center;
  justify-content: center;
  flex: 1;
  border-right: 1px solid #b3c9e4;
}
.bg button:last-child { border-right: 0; }
.bg button.wide {
  flex: 0 1 32px;
  gap: 4px;
}
.bg button.sel {
  background: linear-gradient(#f9d9a9, #fbb75c 45%, #fba73e 46%, #fee58a);
}
.w32 { width: 32px; }
.w34 { width: 34px; }
.w44 { width: 44px; flex: none; }
.w46 { width: 46px; }
.w66 { width: 66px; }
.w70 { width: 70px; }
.w79 { width: 79px; }
.w80 { width: 80px; }
.serif {
  font-family: "Liberation Serif", serif;
  font-size: 15px;
  font-weight: bold;
  color: #222;
}
.serif svg { align-self: flex-start; margin-top: 3px; }
.f17 { font-size: 17px; }
.f14 { font-size: 14px; }
.it { font-style: italic; }
.fc span {
  height: 17px;
  padding: 0 2px;
  line-height: 14px;
  font-family: "Liberation Serif", serif;
  font-size: 16px;
  font-weight: bold;
  color: #3a5fa8;
  border-bottom: 4px solid #f00;
}
.ori { overflow: visible; }
.ori text, .az text { font-family: "Liberation Serif", serif; }
.glyph {
  font-size: 12px;
  color: #333;
}
.n000 { font-size: 11px; }
.bg button.dec {
  flex-direction: column;
  align-items: flex-end;
  padding-right: 3px;
  font-size: 8px;
  font-weight: bold;
  line-height: 10px;
  color: #444;
}
.dec span {
  display: flex;
  align-items: center;
  gap: 1px;
}
.leftcol { width: 124px; }
.vline {
  width: 1px;
  margin: 6px 0;
  background: #9dbbe0;
  box-shadow: 1px 0 #eef5fc;
}
.wrapcol { padding-left: 6px; }

.big {
  display: flex;
  flex-direction: column;
  align-items: center;
  padding-top: 5px;
  white-space: nowrap;
}
.big svg {
  height: 34px;
  padding-bottom: 2px;
  overflow: visible;
}
.big span {
  line-height: 13px;
}
.big > .arrow { margin-top: 5px; }
.big span .arrow { margin: 0 0 2px 4px; }
.paste { width: 57px; }
.w104 { width: 104px; margin-left: 3px; }
.w92 { width: 92px; }
.w50 { width: 50px; }
.w50:first-child { margin-left: 2px; }
.w72 { width: 72px; }
.w62 { width: 62px; }
.stack {
  display: flex;
  flex-direction: column;
}
.small {
  display: flex;
  align-items: center;
  gap: 3px;
  height: 22px;
  white-space: nowrap;
}
.small .arrow { margin-left: 2px; }
.editstack {
  width: 90px;
  padding-left: 6px;
  margin-right: 4px;
}
.editstack svg { margin-right: 1px; }

/* cell style gallery */
.gallery {
  display: flex;
  height: 60px;
  margin: 3px 0 0 1px;
  border: 1px solid #b1cbe9;
  background: #d3e3f6;
}
.cells {
  display: grid;
  grid-template-columns: 101px 101px 101px;
  grid-auto-rows: 22px;
  gap: 6px 5px;
  padding: 4px 4px 0 3px;
}
.st {
  padding-left: 4px;
  text-align: left;
  font-family: "Liberation Serif", serif;
  font-size: 16px;
  overflow: hidden;
}
.st.normal {
  font-family: "Noto Sans", sans-serif;
  font-size: 12px;
  color: #000;
  background: #fff;
  outline: 2px solid #efb04f;
  box-shadow: 0 0 0 3px #b98e50;
}
.st.neutral { background: #ffeb9c; color: #9c6500; }
.st.bad { background: #ffc7ce; color: #9c0006; }
.st.good { background: #c6efce; color: #006100; }
.st.input { background: #fc9; color: #3f3f76; border: 1px solid #7f7f7f; }
.st.output { background: #f2f2f2; color: #3f3f3f; border: 1px solid #3f3f3f; font-weight: bold; }
.gscroll {
  display: flex;
  flex-direction: column;
  width: 14px;
}
.gscroll button {
  display: flex;
  align-items: center;
  justify-content: center;
  flex: 1;
  border: 1px solid #b1cbe9;
  background: linear-gradient(#dfeafa, #c6daf3);
}
.gscroll .off { background: #e9edf2; }

/* Formula bar */
.fbar {
  flex: none;
  display: flex;
  height: 23px;
  border: solid #6f94c3;
  border-width: 1px 0;
  background: #fff;
}
.namebox {
  display: flex;
  align-items: center;
  width: 213px;
  padding-right: 5px;
}
.namebox input {
  flex: 1;
  min-width: 0;
  padding-right: 6px;
  text-align: center;
  font-family: "Liberation Serif", serif;
  font-size: 15px;
  color: #000;
}
.fx {
  display: flex;
  align-items: center;
  justify-content: space-between;
  width: 89px;
  padding: 0 7px 0 5px;
  border: 1px solid #7d9cc7;
  border-width: 0 1px;
  border-radius: 11px 0 0 11px;
  background: linear-gradient(#dbe7f7, #a8c2e6);
}
.dot {
  width: 9px;
  height: 9px;
  border-radius: 50%;
  background: radial-gradient(circle at 60% 60%, #fff, #9ba9bd);
}
.fx button {
  font-family: "Liberation Serif", serif;
  font-size: 15px;
  font-style: italic;
  font-weight: bold;
  line-height: 18px;
  color: #333;
}
.fx sub { font-size: 11px; line-height: 1px; vertical-align: -1px; }
.formula {
  flex: 1;
  min-width: 0;
  color: #000;
}
.expand {
  display: flex;
  align-items: center;
  justify-content: center;
  width: 16px;
  border: 1px solid #6f94c3;
  background: linear-gradient(#e6effb, #b1cae9);
}

/* Sheet */
.sheet {
  flex: 1;
  min-height: 0;
  display: flex;
  border-top: 3px solid #d6e5f7;
  box-shadow: inset 0 1px #5f86b3;
  background: #fff;
}
.gridwrap {
  flex: 1;
  min-width: 0;
  padding-top: 1px;
  overflow: hidden;
}
.grid {
  table-layout: fixed;
  width: 0;
  border-collapse: separate;
  border-spacing: 0;
}
.grid col { width: 54px; }
.grid .c-head { width: 23px; }
.grid .c-a { width: 151px; }
.grid .c-b { width: 62px; }
.grid .c-c { width: 65px; }
.grid .c-d { width: 65px; }
.grid .c-e { width: 60px; }
.grid .c-f { width: 59px; }
.grid .c-g { width: 55px; }
.grid .c-j { width: 63px; }
.grid th, .grid td {
  padding: 0;
  border-right: 1px solid #d0d7e5;
  border-bottom: 1px solid #d0d7e5;
  line-height: 14px;
}
.grid th {
  font-weight: normal;
  color: #27413e;
  border-color: #9eb6ce;
}
.grid thead th {
  height: 16px;
  background: linear-gradient(#f8fbfd, #e4eaf2 50%, #d5dde9);
}
.grid tbody th {
  vertical-align: bottom;
  background: #e4ecf7;
}
.grid td {
  font-family: "Liberation Serif", serif;
  font-size: 14px;
  text-align: center;
  color: #000;
  white-space: nowrap;
}
.grid .corner {
  background: linear-gradient(135deg, #a9c4e9 60%, #e6eefa 61%);
}
.grid th.cur {
  background: linear-gradient(#f9d99f, #f1c15f);
  border-color: #f29536;
}
.h18 { height: 18px; }
.h21 { height: 21px; }
.h23 { height: 23px; }
.grid td.k { border-color: #000; }
.grid td.b { font-weight: bold; }
.grid td.big16 { font-size: 16px; }
.grid td.red {
  font-size: 18px;
  font-weight: bold;
  color: #f00;
}
/* selected cell frame with its fill handle */
.grid td.active { position: relative; }
.active::before {
  content: "";
  position: absolute;
  inset: -2px;
  border: 3px solid #000;
}
.active::after {
  content: "";
  position: absolute;
  right: -4px;
  bottom: -4px;
  width: 7px;
  height: 7px;
  border: 1px solid #fff;
  background: #000;
}

.vscroll {
  display: flex;
  flex-direction: column;
  align-items: center;
  width: 20px;
  padding-top: 1px;
  border: solid #bcd3f2;
  border-width: 0 3px 0 1px;
  background: linear-gradient(90deg, #5f80b5, #86a4d0);
}
.split {
  width: 14px;
  height: 8px;
  border: 1px solid #567;
  background: #eef4fd;
}
.vscroll button {
  height: 18px;
  display: flex;
  align-items: center;
}
.vthumb {
  width: 14px;
  height: 20px;
  border: 1px solid #4d648b;
  background: repeating-linear-gradient(#7d8ba3 0 1px, #fff 1px 3px) center / 8px 9px no-repeat, linear-gradient(90deg, #fff, #cfd5df);
}
.fill { flex: 1; }

/* Sheet tabs and horizontal scroll */
.sheetbar {
  flex: none;
  display: grid;
  grid-template-columns: 1fr 778px;
  height: 17px;
  background: linear-gradient(#8ba9d8, #a3bce3);
  border-top: 1px solid #c6d9f3;
  border-bottom: 1px solid #41639b;
}
.sheettabs { display: flex; }
.navs {
  display: flex;
  align-items: center;
  justify-content: space-between;
  width: 65px;
  padding: 0 8px 0 5px;
  background: #c3d8f5;
}
.stab, .slash {
  background: linear-gradient(#d5e3f8, #c6daf7 50%, #b3cef4 51%, #dbe8fb);
}
.stab {
  padding: 0 11px 0 8px;
  font-size: 12px;
  line-height: 15px;
  white-space: nowrap;
}
.stab.first {
  padding-left: 13px;
  border-left: 1px solid #7389b0;
}
.stab.on {
  padding-right: 6px;
  font-weight: bold;
  border-left: 1px solid #7389b0;
  background: linear-gradient(#fff, #f2f7ff 60%, #dce8fb);
}
.newtab {
  width: 21px;
  background: #c3d6f4;
}
.hscroll {
  display: flex;
  align-items: center;
  background: #7594c2;
}
.hscroll button {
  display: flex;
  align-items: center;
  justify-content: center;
  width: 17px;
}
.hsplit {
  width: 6px;
  height: 15px;
  border: 1px solid #6079a3;
  background: #f3f8ff;
}
.hthumb {
  flex: 617;
  height: 14px;
  border: 1px solid #566d94;
  background: repeating-linear-gradient(90deg, #77849b 0 1px, transparent 1px 2px) center / 8px 7px no-repeat, linear-gradient(#fbfcfd, #e0e4ea 45%, #ccd1d9 46%, #b9c1cd);
}
.hfill { flex: 94; }
.hcorner {
  width: 21px;
  height: 15px;
  background: #7b9bd0;
}

/* Status bar */
.status {
  flex: none;
  display: flex;
  align-items: stretch;
  height: 21px;
  background: linear-gradient(#e2edfc, #c6dcf9 30%, #aecdf5 32%, #d5e5fb);
}
.ready {
  padding: 0 12px 0 7px;
  line-height: 20px;
  border-right: 1px solid #9cbce8;
}
.grow { flex: 1; }
.zoom {
  display: flex;
  align-items: center;
  padding: 0 4px 0 6px;
  border-left: 1px solid #6488c4;
  background: linear-gradient(#a9c9f5, #88aee4 45%, #6a93d2 46%, #8fb5ea);
}
.views {
  display: flex;
  height: 18px;
  border: 1px solid #6d8dbd;
  border-radius: 2px;
  background: #b9d2f3;
}
.views button {
  display: flex;
  align-items: center;
  justify-content: center;
  width: 18px;
}
.views .sel { background: linear-gradient(#fddfa2, #f9bb55 50%, #fde08a); }
.pct {
  width: 45px;
  padding-left: 8px;
  text-align: left;
  color: #0a2a6a;
}
.zb { display: flex; }
.slider {
  appearance: none;
  width: 101px;
  height: 17px;
  background: linear-gradient(#fff, #fff) center / 100% 1px no-repeat, linear-gradient(#fff, #fff) center / 1px 7px no-repeat;
}
.slider::-webkit-slider-thumb {
  appearance: none;
  width: 9px;
  height: 13px;
  border: 1px solid #3e5b90;
  background: #dfeafb;
  clip-path: polygon(0 0, 100% 0, 100% 65%, 50% 100%, 0 65%);
}

/* Taskbar */
.taskbar {
  flex: none;
  display: flex;
  align-items: center;
  height: 40px;
  border-top: 1px solid #34475c;
  background: linear-gradient(90deg, #8aa0b8 50px, #b1ceea 78px);
}
.start {
  width: 59px;
  padding-left: 8px;
}
.task {
  display: flex;
  align-items: center;
  justify-content: center;
  width: 60px;
  height: 39px;
  margin-right: 2px;
}
.task.open {
  border: 1px solid #4c6178;
  border-radius: 3px;
  background: linear-gradient(135deg, #eaf2fa, #c4daef 60%, #bcd5ed);
  box-shadow: inset 0 0 0 1px #eef6fd;
}
.tray {
  display: flex;
  align-items: center;
  gap: 8px;
  height: 39px;
  margin-left: auto;
  padding-left: 47px;
  color: #fff;
  background: linear-gradient(90deg, #b1ceea, #8ba0b7 40px);
}
.lang {
  margin-right: 8px;
  padding-bottom: 6px;
}
.more { margin-right: 5px; }
.clock {
  display: flex;
  flex-direction: column;
  align-items: center;
  width: 66px;
  line-height: 17px;
}
.peek {
  width: 15px;
  height: 39px;
  border: 1px solid #5c7188;
  background: linear-gradient(#a9bccf, #7b92aa 50%, #92a9c0);
}
```
FILE: grid.js
```js
// A..AF
const letters = [];
for (let i = 0; i < 32; i++) {
    letters.push((i > 25 ? 'A' : '') + String.fromCharCode(65 + i % 26));
}

const head = document.getElementById('letters');
letters.forEach(l => {
    const th = document.createElement('th');
    th.textContent = l;
    if (l === 'P') th.className = 'cur';
    head.appendChild(th);
});

const body = document.getElementById('rows');
// filled rows only hold A..G, pad them to the last column
for (const tr of body.rows) {
    for (let i = 7; i < letters.length; i++) {
        tr.appendChild(document.createElement('td'));
    }
}

for (let n = 11; n <= 44; n++) {
    const tr = document.createElement('tr');
    tr.className = 'h18';
    const th = document.createElement('th');
    th.textContent = n;
    if (n === 14) th.className = 'cur';
    tr.appendChild(th);
    letters.forEach(l => {
        const td = document.createElement('td');
        if (n === 14 && l === 'P') td.className = 'active';
        tr.appendChild(td);
    });
    body.appendChild(tr);
}
```
